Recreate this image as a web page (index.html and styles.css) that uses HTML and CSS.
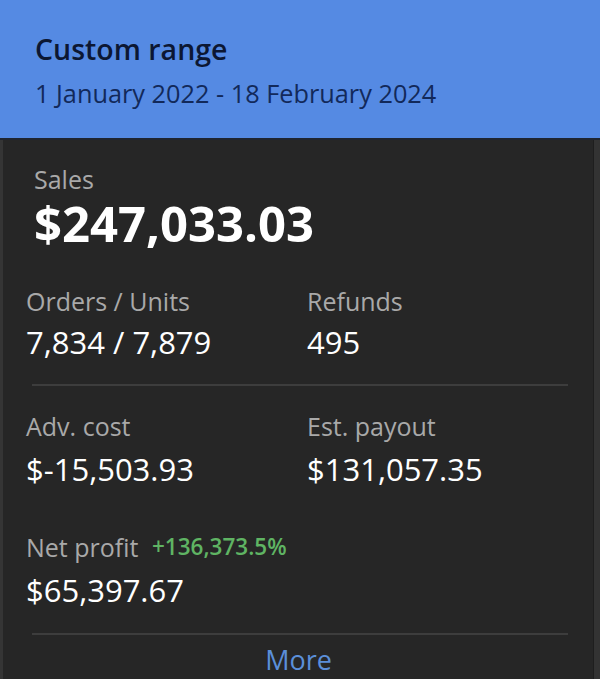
FILE: index.html
```html
<!DOCTYPE html>
<html>
<head>
<meta charset="utf-8">
<link rel="stylesheet" href="styles.css">
</head>
<body>
<div class="card">
  <header class="head">
    <div class="title">Custom range</div>
    <div class="range">1 January 2022 - 18 February 2024</div>
  </header>
  <main class="body">
    <section class="sales">
      <div class="label sales-label">Sales</div>
      <div class="big">$247,033.03</div>
    </section>
    <section class="grid first">
      <div class="metric">
        <div class="label">Orders / Units</div>
        <div class="value">7,834 / 7,879</div>
      </div>
      <div class="metric">
        <div class="label">Refunds</div>
        <div class="value">495</div>
      </div>
    </section>
    <hr class="divider">
    <section class="grid second">
      <div class="metric">
        <div class="label">Adv. cost</div>
        <div class="value">$-15,503.93</div>
      </div>
      <div class="metric">
        <div class="label">Est. payout</div>
        <div class="value">$131,057.35</div>
      </div>
      <div class="metric net">
        <div class="label">Net profit <span class="pct">+136,373.5%</span></div>
        <div class="value">$65,397.67</div>
      </div>
    </section>
    <hr class="divider">
    <div class="more">More</div>
  </main>
</div>
</body>
</html>
```
FILE: styles.css
```css
html, body {
  margin: 0;
  padding: 0;
  background: #262626;
}
body {
  font-family: "Open Sans", "Noto Sans", sans-serif;
  width: 600px;
  height: 679px;
  overflow: hidden;
}
.card {
  display: flex;
  flex-direction: column;
  height: 679px;
}
.head {
  background: #558ae3;
  height: 140px;
  box-sizing: border-box;
  padding: 32px 0 0 35px;
  border-bottom: 2px solid #1f2530;
}
.title {
  font-size: 28.5px;
  font-weight: 600;
  line-height: 34px;
  color: #0c1733;
}
.range {
  margin-top: 12px;
  font-size: 25.3px;
  line-height: 30px;
  color: #12295a;
  font-weight: 500;
}
.body {
  flex: 1;
  background: #262626;
  border-left: 3px solid #353535;
  border-right: 6px solid #333333;
  box-shadow: inset -1px 0 0 #1e1e1e;
  padding: 25px 0 0 23px;
  box-sizing: border-box;
}
.label {
  font-size: 25px;
  line-height: 30px;
  color: #a9a9a9;
}
.sales {
  padding-left: 8px;
}
.sales-label {
  line-height: 28px;
}
.big {
  margin-top: 4px;
  font-size: 49px;
  line-height: 52px;
  font-weight: 700;
  color: #ffffff;
}
.grid {
  display: grid;
  grid-template-columns: 281px 1fr;
}
.first {
  margin-top: 37px;
}
.second {
  margin-top: 25px;
  row-gap: 43px;
}
.value {
  font-size: 31px;
  line-height: 40px;
  color: #ffffff;
  margin-top: 6px;
}
.second .value {
  margin-top: 8px;
}
.pct {
  font-size: 22.5px;
  font-weight: 600;
  color: #5fb463;
  margin-left: 7px;
  vertical-align: 2px;
}
.divider {
  border: 0;
  height: 2px;
  background: #3d3d3d;
  margin: 22px 0 0 6px;
  width: 536px;
}
.second + .divider {
  margin-top: 23px;
}
.more {
  margin-left: -23px;
  margin-top: 10px;
  text-align: center;
  font-size: 27px;
  line-height: 30px;
  color: #5b8fd9;
}
```
